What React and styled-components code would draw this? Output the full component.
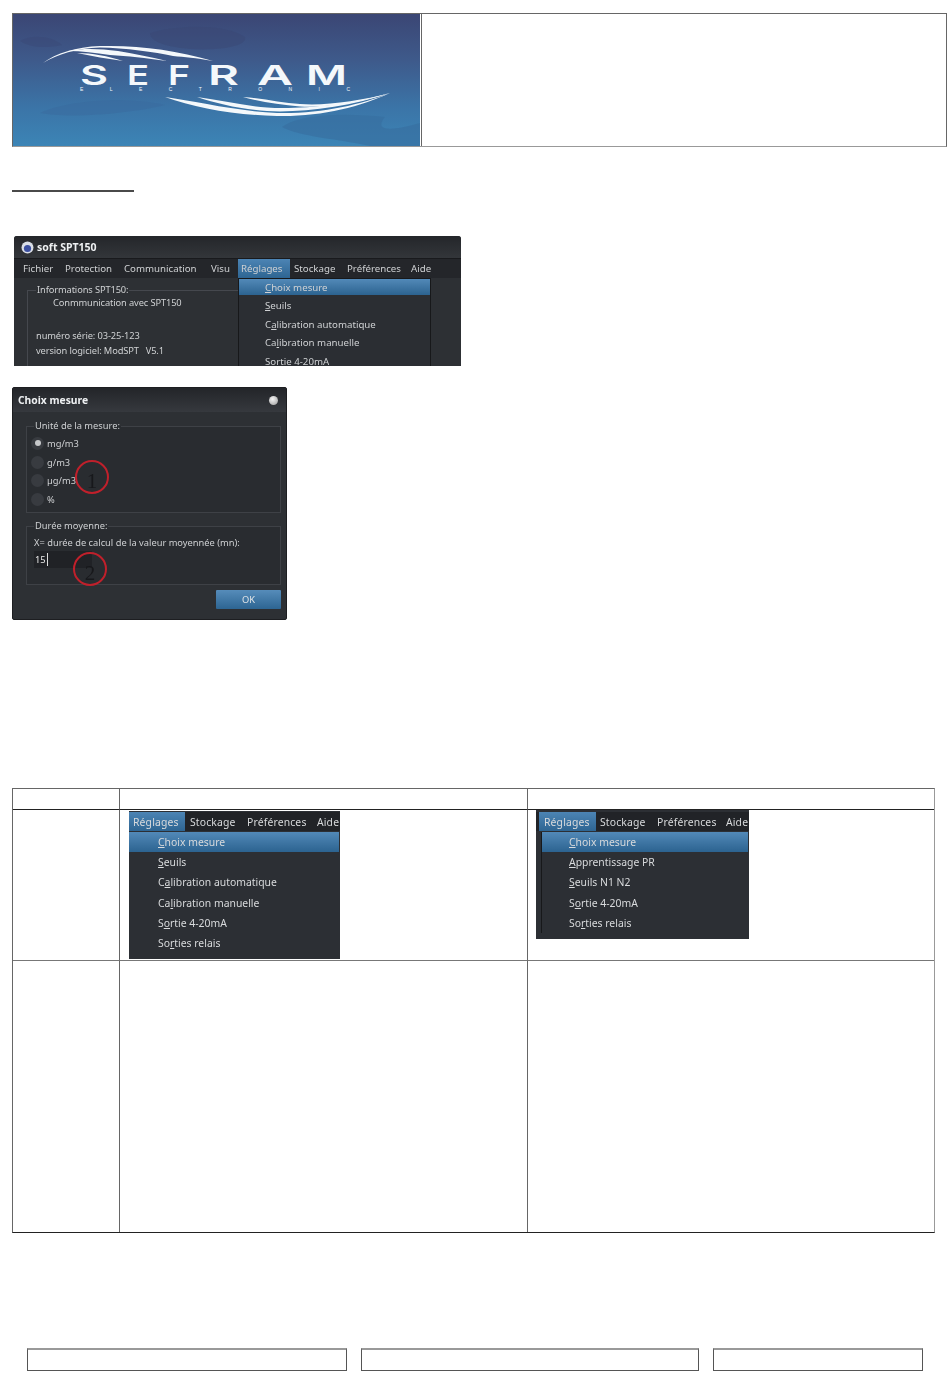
import React from "react";
import styled, { createGlobalStyle } from "styled-components";

const GlobalStyle = createGlobalStyle`
  html, body { margin: 0; padding: 0; background: #fff; }
  body { font-family: "Liberation Sans", Arial, sans-serif; }
`;

const UI_FONT = `"Noto Sans", "Open Sans", sans-serif`;

const Page = styled.div`
  width: 950px;
  height: 1397px;
  padding: 13px 0 0 12px;
  box-sizing: border-box;
  overflow: hidden;
`;

/* header */
const HeaderBox = styled.div`
  width: 935px;
  height: 134px;
  box-sizing: border-box;
  display: flex;
  border: 1px solid #666;
  border-bottom-color: #999;
`;
const LogoCell = styled.div`
  width: 408px;
  flex: none;
  border-right: 1px solid #666;
  svg { display: block; }
`;
const TitleRule = styled.div`
  width: 122px;
  height: 2px;
  margin-top: 43px;
  background: #4a4a4a;
`;

/* dark app screens */
const SoftWindow = styled.div`
  width: 447px;
  height: 130px;
  margin: 44px 0 0 2px;
  position: relative;
  overflow: hidden;
  background: #2d3034;
  color: #cfd1d3;
  font: 9.7px ${UI_FONT};
  filter: blur(0.35px);
  border-radius: 3px 3px 0 0;
`;
const WindowTitle = styled.div`
  height: 22px;
  display: flex;
  align-items: center;
  gap: 3px;
  padding-left: 7px;
  background: linear-gradient(#24262a, #33363a);
  color: #eef0f2;
  font-weight: 700;
  font-size: 10.5px;
  svg { flex: none; }
`;
const MenuBar = styled.div`
  height: 19px;
  display: flex;
  align-items: center;
  background: #24262a;
  border-top: 1px solid #191a1d;
`;
const MenuLabel = styled.span`
  height: 100%;
  display: flex;
  align-items: center;
  box-sizing: border-box;
  flex: none;
  width: ${(p) => p.$w}px;
  padding-left: ${(p) => p.$pad || 0}px;
  white-space: nowrap;
  background: ${(p) => (p.$active ? "linear-gradient(#4c84b4, #2e6592)" : "none")};
`;
const InfoGroup = styled.fieldset`
  margin: 6px 0 0 13px;
  width: 400px;
  height: 100px;
  padding: 0 0 0 8px;
  box-sizing: border-box;
  border: 1px solid #45484e;
  border-right: none;
  font-size: 9.3px;
  letter-spacing: -0.12px;
  legend {
    padding: 0 1px;
    line-height: 12px;
  }
`;
const InfoLine = styled.div`
  line-height: 14px;
  white-space: nowrap;
  margin-top: ${(p) => p.$top || 0}px;
  margin-left: ${(p) => p.$indent || 0}px;
`;

const Dropdown = styled.div`
  position: absolute;
  left: 224px;
  top: 42px;
  width: 193px;
  background: #2b2e33;
  border: 1px solid #17181a;
  box-sizing: border-box;
`;
const DropItem = styled.div`
  height: ${(p) => p.$h}px;
  margin-bottom: ${(p) => p.$after || 0}px;
  display: flex;
  align-items: center;
  padding-left: ${(p) => p.$pad}px;
  white-space: nowrap;
  box-sizing: border-box;
  background: ${(p) => (p.$active ? "linear-gradient(#5289b8, #2c6390)" : "none")};
  u { text-underline-offset: 1px; }
`;

/* choix mesure dialog */
const Dialog = styled.div`
  width: 275px;
  height: 233px;
  margin-top: 21px;
  position: relative;
  background: #2d3034;
  color: #cfd1d3;
  font: 9.3px ${UI_FONT};
  border: 1px solid #1d1e21;
  box-sizing: border-box;
  border-radius: 2px;
  filter: blur(0.35px);
  display: flex;
  flex-direction: column;
  overflow: hidden;
`;
const DialogTitle = styled.div`
  height: 24px;
  flex: none;
  display: flex;
  align-items: center;
  justify-content: space-between;
  padding: 0 8px 0 5px;
  background: linear-gradient(#232529, #36393e);
  color: #eef0f2;
  font-weight: 700;
  font-size: 10.3px;
`;
const CloseOrb = styled.span`
  width: 9px;
  height: 9px;
  border-radius: 50%;
  background: radial-gradient(circle at 40% 35%, #f4f4f4, #9a9a9a);
`;
const DialogBody = styled.div`
  flex: 1;
  padding: 8px 5px 0 13px;
  display: flex;
  flex-direction: column;
`;
const DialogGroup = styled.fieldset`
  margin: 0;
  padding: 0 0 0 ${(p) => p.$pad}px;
  height: ${(p) => p.$h}px;
  margin-bottom: ${(p) => p.$gap}px;
  box-sizing: border-box;
  border: 1px solid #3e4146;
  background: #292c30;
  legend {
    margin-left: ${(p) => p.$legend}px;
    padding: 0 1px;
    line-height: 12px;
  }
`;
const RadioList = styled.div`
  padding-top: 2px;
`;
const RadioRow = styled.div`
  height: 18.7px;
  display: flex;
  align-items: center;
  gap: 3px;
`;
const RadioDot = styled.span`
  width: 13px;
  height: 13px;
  border-radius: 50%;
  background: #383b40;
  display: flex;
  align-items: center;
  justify-content: center;
  &::after {
    content: "";
    width: 6px;
    height: 6px;
    border-radius: 50%;
    background: ${(p) => (p.$on ? "#c6c8ca" : "transparent")};
  }
`;
const FieldLabel = styled.div`
  line-height: 14px;
  margin-top: 4px;
  white-space: nowrap;
`;
const NumberField = styled.div`
  width: 58px;
  height: 17px;
  margin-top: 1px;
  padding-left: 1px;
  box-sizing: border-box;
  background: #202226;
  color: #e8e8e8;
  line-height: 17px;
  span { border-right: 1px solid #ddd; padding-right: 1px; }
`;
const DialogFooter = styled.div`
  display: flex;
  justify-content: flex-end;
  padding-top: 5px;
`;
const OkButton = styled.div`
  width: 65px;
  height: 19px;
  line-height: 19px;
  text-align: center;
  color: #dfe3e6;
  border-radius: 1px;
  background: linear-gradient(#568cba, #2d6592);
`;
const Marker = styled.div`
  position: absolute;
  left: ${(p) => p.$x}px;
  top: ${(p) => p.$y}px;
  width: 34px;
  height: 34px;
  box-sizing: border-box;
  border: 2px solid #c0202b;
  border-radius: 50%;
  color: #17181b;
  font: 21px/38px "Liberation Serif", serif;
  text-align: center;
`;

/* comparison table */
const CompareTable = styled.div`
  width: 923px;
  height: 445px;
  margin-top: 168px;
  box-sizing: border-box;
  display: grid;
  grid-template-columns: 106px 408px 1fr;
  grid-template-rows: 20px 151px 1fr;
  border-top: 1px solid #666;
  border-left: 1px solid #666;
  border-right: 1px solid #999;
  border-bottom: 1px solid #222;
`;
const Cell = styled.div`
  position: relative;
  box-sizing: border-box;
  border-left: ${(p) => (p.$first ? "none" : "1px solid #666")};
  border-top: ${(p) => (p.$head ? "none" : p.$dark ? "1px solid #222" : "1px solid #777")};
  padding: ${(p) => p.$pad || "0"};
`;
const MenuShot = styled.div`
  width: ${(p) => p.$w}px;
  height: ${(p) => p.$h}px;
  background: #2c2f34;
  color: #d8dadc;
  font: 10.4px ${UI_FONT};
  overflow: hidden;
  box-sizing: border-box;
  padding-top: ${(p) => p.$top}px;
  filter: blur(0.3px);
`;
const ShotBar = styled.div`
  height: 19px;
  display: flex;
  align-items: stretch;
  padding-left: ${(p) => p.$left}px;
  background: #212327;
  letter-spacing: 0.15px;
`;
const ShotList = styled.div`
  margin: 1px 1px 0 ${(p) => p.$left}px;
  border-left: ${(p) => (p.$left ? "1px solid #17181a" : "none")};
`;

/* footer */
const FooterRow = styled.div`
  display: flex;
  margin: 115px 0 0 15px;
  gap: 14px;
`;
const FooterBox = styled.div`
  width: ${(p) => p.$w}px;
  height: 23px;
  box-sizing: border-box;
  border: 1px solid #555;
  border-top: 2px solid #999;
`;

const logoLetters = [
  ["S", 80, 28],
  ["E", 127, 22],
  ["F", 168, 22],
  ["R", 208, 31],
  ["A", 257, 36],
  ["M", 306, 41],
];

const SeframLogo = () => (
  <svg width="407" height="132" viewBox="13 13 407 132" preserveAspectRatio="none">
    <defs>
      <linearGradient id="sky" x1="0" y1="0" x2="0" y2="1">
        <stop offset="0" stopColor="#3b4674" />
        <stop offset="0.35" stopColor="#3e5a8b" />
        <stop offset="0.7" stopColor="#3b74a7" />
        <stop offset="1" stopColor="#3c85b6" />
      </linearGradient>
    </defs>
    <rect x="13" y="13" width="407" height="133" fill="url(#sky)" />
    <path d="M150 32 C175 24 225 22 245 36 C248 44 225 50 190 48 C170 46 150 42 150 32Z" fill="#3a4674" opacity="0.45" />
    <path d="M20 40 C32 32 55 36 62 44 C45 48 28 46 20 40Z" fill="#3a4674" opacity="0.35" />
    <path d="M40 112 C70 98 130 96 165 104 C135 112 70 118 40 112Z" fill="#3a6a9e" opacity="0.5" />
    <path d="M282 126 C300 112 350 112 385 116 C375 128 385 132 420 122 L420 146 L375 146 C340 138 300 136 282 126Z" fill="#386f9f" opacity="0.65" />
    <g fill="#f4f8fb">
      <path d="M43 62 C56 52 76 46 100 45 C140 44 175 49 213 60 C195 57 185 56 173 55 C155 51 125 47 100 46.5 C76 47.5 58 53 43 62Z" />
      <path d="M68 50 C85 47 100 48 118 50 C135 53 152 56 167 60 C145 57 128 55 110 54 C95 52 82 50 68 50Z" />
      <path d="M77 52 C92 52 108 55 123 60 C108 58 92 55 77 52Z" />
      <path d="M165 96 C195 100 235 110 277 112 C320 113 360 104 390 92 C360 106 320 116 277 115 C235 114 195 107 165 96Z" />
      <path d="M197 96 C220 99 245 105 267 106.5 C295 108.5 345 105 390 92 C350 106 300 112 267 110 C240 108 218 103 197 96Z" />
      <path d="M243 96 C262 97 282 102 300 103 C325 105 360 100 390 92 C360 102 325 107 300 105.5 C280 104 260 101 243 96Z" />
      {logoLetters.map(([letter, x, w]) => (
        <text
          key={letter}
          x={x}
          y="83.5"
          textLength={w}
          lengthAdjust="spacingAndGlyphs"
          fontFamily='Inter, "Liberation Sans", sans-serif'
          fontWeight="600"
          fontSize="27.5"
        >
          {letter}
        </text>
      ))}
      <text
        x="80"
        y="90"
        textLength="270"
        lengthAdjust="spacing"
        fontFamily='"Liberation Sans", sans-serif'
        fontSize="5"
      >
        ELECTRONIC
      </text>
    </g>
  </svg>
);

const AppIcon = () => (
  <svg width="13" height="13" viewBox="0 0 13 13">
    <circle cx="6.5" cy="6.5" r="6" fill="#d9dde6" />
    <circle cx="6.5" cy="7.5" r="3.6" fill="#3b4fa0" />
  </svg>
);

const softMenus = [
  ["Fichier", 51, 9],
  ["Protection", 59, 0],
  ["Communication", 87, 0],
  ["Visu", 27, 0],
  ["Réglages", 52, 3, true],
  ["Stockage", 57, 4],
  ["Préférences", 64, 0],
  ["Aide", 30, 0],
];

const softItems = [
  [<><u>C</u>hoix mesure</>, true],
  [<><u>S</u>euils</>],
  [<>C<u>a</u>libration automatique</>],
  [<>Ca<u>l</u>ibration manuelle</>],
  [<>S<u>o</u>rtie 4-20mA</>],
];

const calItems = [
  [<><u>C</u>hoix mesure</>, true],
  [<><u>S</u>euils</>],
  [<>C<u>a</u>libration automatique</>],
  [<>Ca<u>l</u>ibration manuelle</>],
  [<>S<u>o</u>rtie 4-20mA</>],
  [<>So<u>r</u>ties relais</>],
];

const prItems = [
  [<><u>C</u>hoix mesure</>, true],
  [<><u>A</u>pprentissage PR</>],
  [<><u>S</u>euils N1 N2</>],
  [<>S<u>o</u>rtie 4-20mA</>],
  [<>So<u>r</u>ties relais</>],
];

const SettingsShot = ({ w, h, top, barLeft, labelPad, widths, listLeft, itemPad, items }) => (
  <MenuShot $w={w} $h={h} $top={top}>
    <ShotBar $left={barLeft}>
      <MenuLabel $w={widths[0]} $pad={labelPad} $active>Réglages</MenuLabel>
      <MenuLabel $w={widths[1]} $pad={widths[1] > 61 ? 5 : 4}>Stockage</MenuLabel>
      <MenuLabel $w={widths[2]}>Préférences</MenuLabel>
      <MenuLabel $w={widths[3]}>Aide</MenuLabel>
    </ShotBar>
    <ShotList $left={listLeft}>
      {items.map(([label, active], i) => (
        <DropItem key={i} $h={20.2} $pad={itemPad} $active={active}>{label}</DropItem>
      ))}
    </ShotList>
  </MenuShot>
);

export default function App() {
  return (
    <Page>
      <GlobalStyle />
      <HeaderBox>
        <LogoCell><SeframLogo /></LogoCell>
      </HeaderBox>
      <TitleRule />

      <SoftWindow>
        <WindowTitle><AppIcon />soft SPT150</WindowTitle>
        <MenuBar>
          {softMenus.map(([label, w, pad, active]) => (
            <MenuLabel key={label} $w={w} $pad={pad} $active={active}>{label}</MenuLabel>
          ))}
        </MenuBar>
        <InfoGroup>
          <legend>Informations SPT150:</legend>
          <InfoLine $indent={17}>Conmmunication avec SPT150</InfoLine>
          <InfoLine $top={19}>numéro série: 03-25-123</InfoLine>
          <InfoLine $top={1}>version logiciel: ModSPT&nbsp;&nbsp; V5.1</InfoLine>
        </InfoGroup>
        <Dropdown>
          {softItems.map(([label, active], i) => (
            <DropItem key={i} $h={active ? 16 : 18.7} $after={active ? 1 : 0} $pad={26} $active={active}>
              {label}
            </DropItem>
          ))}
        </Dropdown>
      </SoftWindow>

      <Dialog>
        <DialogTitle>Choix mesure<CloseOrb /></DialogTitle>
        <DialogBody>
          <DialogGroup $h={93} $pad={4} $legend={3} $gap={7}>
            <legend>Unité de la mesure:</legend>
            <RadioList>
              <RadioRow><RadioDot $on />mg/m3</RadioRow>
              <RadioRow><RadioDot />g/m3</RadioRow>
              <RadioRow><RadioDot />µg/m3</RadioRow>
              <RadioRow><RadioDot />%</RadioRow>
            </RadioList>
          </DialogGroup>
          <DialogGroup $h={65} $pad={7} $legend={0} $gap={0}>
            <legend>Durée moyenne:</legend>
            <FieldLabel>X= durée de calcul de la valeur moyennée (mn):</FieldLabel>
            <NumberField><span>15</span></NumberField>
          </DialogGroup>
          <DialogFooter><OkButton>OK</OkButton></DialogFooter>
        </DialogBody>
        <Marker $x={62} $y={72}>1</Marker>
        <Marker $x={60} $y={164}>2</Marker>
      </Dialog>

      <CompareTable>
        <Cell $first $head />
        <Cell $head />
        <Cell $head />
        <Cell $first $dark />
        <Cell $dark $pad="1px 0 0 9px">
          <SettingsShot
            w={211}
            h={148}
            top={1}
            barLeft={0}
            labelPad={4}
            widths={[56, 62, 70, 23]}
            listLeft={0}
            itemPad={29}
            items={calItems}
          />
        </Cell>
        <Cell $dark $pad="0 0 0 8px">
          <SettingsShot
            w={213}
            h={129}
            top={2}
            barLeft={3}
            labelPad={5}
            widths={[57, 61, 69, 23]}
            listLeft={5}
            itemPad={27}
            items={prItems}
          />
        </Cell>
        <Cell $first />
        <Cell />
        <Cell />
      </CompareTable>

      <FooterRow>
        <FooterBox $w={320} />
        <FooterBox $w={338} />
        <FooterBox $w={210} />
      </FooterRow>
    </Page>
  );
}
